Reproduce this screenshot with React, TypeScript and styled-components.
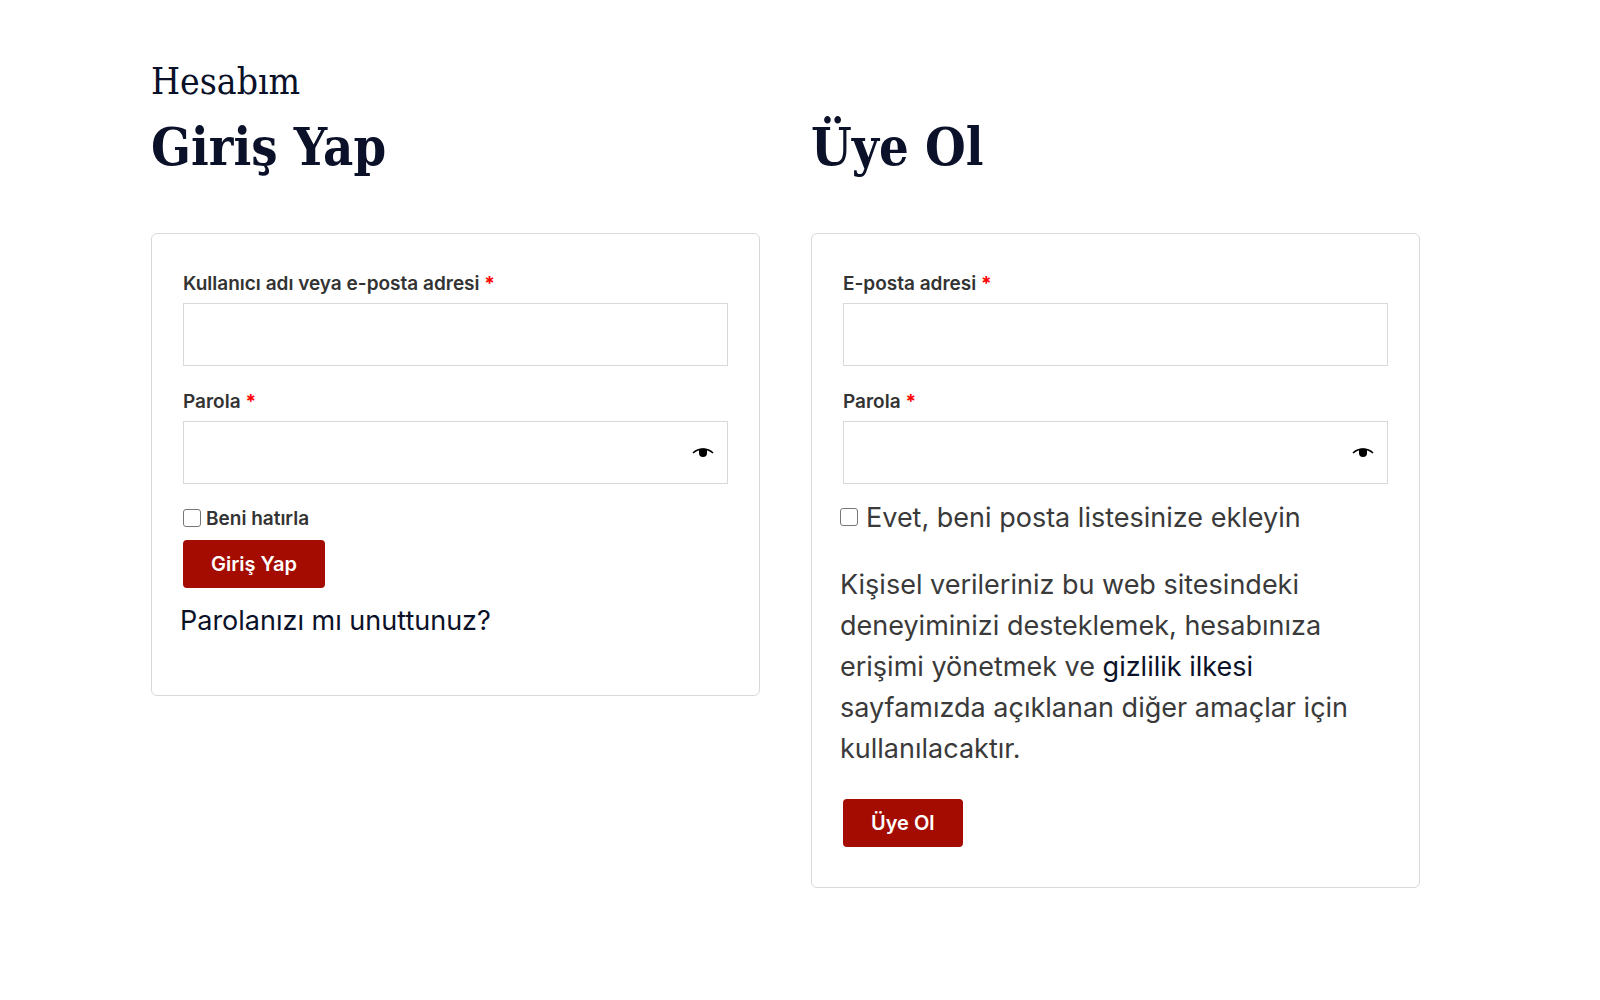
import React from "react";
import styled, { createGlobalStyle } from "styled-components";

const GlobalStyle = createGlobalStyle`
  *, *::before, *::after { box-sizing: border-box; }
  body {
    margin: 0;
    background: #fff;
    color: #3a3a3a;
    font: 400 27px/41px Inter, "Liberation Sans", sans-serif;
  }
`;

const Page = styled.main`
  padding: 60px 180px 60px 151px;
`;

const PageTitle = styled.h1`
  margin: 0;
  color: #0a1128;
  font: 400 37px/44px "DejaVu Serif Condensed", "DejaVu Serif", serif;
`;

const Columns = styled.div`
  display: grid;
  grid-template-columns: 1fr 1fr;
  align-items: start;
  gap: 51px;
`;

const SectionTitle = styled.h2`
  margin: 9px 0 52px;
  color: #0a1128;
  font: 700 52px/68px "DejaVu Serif Condensed", "DejaVu Serif", serif;
`;

const Card = styled.form`
  padding: 34px 31px 40px;
  border: 1px solid #d9d9d9;
  border-radius: 6px;
`;

const Field = styled.div`
  display: flex;
  flex-direction: column;
  margin-bottom: 20px;
`;

const Label = styled.label`
  height: 35px;
  font-size: 19px;
  font-weight: 600;
  line-height: 32px;
  color: #333;
`;

const Required = styled.span`
  color: #f00;
  font-weight: 700;
`;

const InputFrame = styled.div`
  display: flex;
  align-items: center;
  height: 63px;
  padding-right: 13px;
  border: 1px solid #d9d9d9;
`;

const Input = styled.input`
  flex: 1;
  min-width: 0;
  height: 100%;
  padding: 0 16px;
  border: 0;
  background: transparent;
  color: inherit;
  font: inherit;
`;

const EyeButton = styled.button`
  display: flex;
  padding: 0;
  border: 0;
  background: none;
  color: #000;
  cursor: pointer;
`;

const Checkbox = styled.input`
  appearance: none;
  flex: none;
  width: 18px;
  height: 18px;
  margin: 0;
  border: 1px solid #767676;
  border-radius: 3px;
  background: #fff;
  &:checked { background: #a40c02; }
`;

const Remember = styled.label`
  display: flex;
  align-items: center;
  gap: 5px;
  height: 28px;
  margin-bottom: 8px;
  font-size: 19px;
  font-weight: 600;
  color: #333;
`;

const Subscribe = styled.label`
  display: flex;
  align-items: center;
  gap: 8px;
  height: 26px;
`;

const Submit = styled.button`
  display: block;
  height: 48px;
  padding: 0 28px;
  border: 0;
  border-radius: 4px;
  background: #a40c02;
  color: #fff;
  font: 600 20px/48px Inter, "Liberation Sans", sans-serif;
  cursor: pointer;
`;

const Link = styled.a`
  color: #0a1128;
  text-decoration: none;
`;

const Outdent = styled.div`
  margin-left: -3px;
`;

const Forgot = styled.p`
  margin: 12px 0 14px;
`;

const Privacy = styled.p`
  margin: 34px 0 30px;
`;

function EyeIcon() {
  return (
    <svg width="22" height="12" viewBox="0 0 22 12" aria-hidden="true">
      <path d="M1 6C4 3.200 7.500 2 11 2s7 1.200 10 4" fill="none" stroke="currentColor" strokeWidth="1.600" />
      <path d="M7 2.200C9 1.300 13 1.300 15 2.200V6a4 4 0 0 1-8 0Z" fill="currentColor" />
    </svg>
  );
}

interface FieldProps {
  id: string;
  label: string;
  type: "text" | "email" | "password";
}

function FormField({ id, label, type }: FieldProps) {
  const [visible, setVisible] = React.useState(false);
  const secret = type === "password";
  return (
    <Field>
      <Label htmlFor={id}>
        {label} <Required>*</Required>
      </Label>
      <InputFrame>
        <Input id={id} type={secret && visible ? "text" : type} />
        {secret && (
          <EyeButton type="button" aria-label="Parolayı göster" onClick={() => setVisible(!visible)}>
            <EyeIcon />
          </EyeButton>
        )}
      </InputFrame>
    </Field>
  );
}

export default function App() {
  return (
    <Page>
      <GlobalStyle />
      <PageTitle>Hesabım</PageTitle>
      <Columns>
        <section>
          <SectionTitle>Giriş Yap</SectionTitle>
          <Card>
            <FormField id="username" label="Kullanıcı adı veya e-posta adresi" type="text" />
            <FormField id="password" label="Parola" type="password" />
            <Remember>
              <Checkbox type="checkbox" />
              Beni hatırla
            </Remember>
            <Submit type="button">Giriş Yap</Submit>
            <Outdent>
              <Forgot>
                <Link href="#">Parolanızı mı unuttunuz?</Link>
              </Forgot>
            </Outdent>
          </Card>
        </section>
        <section>
          <SectionTitle>Üye Ol</SectionTitle>
          <Card>
            <FormField id="reg-email" label="E-posta adresi" type="email" />
            <FormField id="reg-password" label="Parola" type="password" />
            <Outdent>
              <Subscribe>
                <Checkbox type="checkbox" />
                Evet, beni posta listesinize ekleyin
              </Subscribe>
              <Privacy>
                Kişisel verileriniz bu web sitesindeki deneyiminizi desteklemek, hesabınıza erişimi yönetmek ve{" "}
                <Link href="#">gizlilik ilkesi</Link> sayfamızda açıklanan diğer amaçlar için kullanılacaktır.
              </Privacy>
            </Outdent>
            <Submit type="button">Üye Ol</Submit>
          </Card>
        </section>
      </Columns>
    </Page>
  );
}
